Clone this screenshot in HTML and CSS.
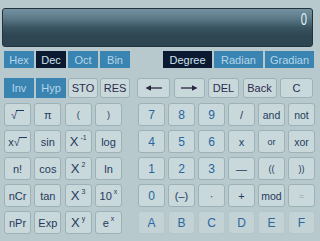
FILE: index.html
```html
<!DOCTYPE html>
<html lang="en">

<head>
    <meta charset="UTF-8">
    <meta name="viewport" content="width=device-width, initial-scale=1.0">
    <title>Calculator</title>
    <link rel="stylesheet" href="styles.css">
</head>

<body>
    <div class="calc">
        <div class="display"><span class="readout">0</span></div>

        <!-- number base and angle unit -->
        <div class="bar modes">
            <div class="group">
                <span class="tab">Hex</span>
                <span class="tab on">Dec</span>
                <span class="tab">Oct</span>
                <span class="tab">Bin</span>
            </div>
            <div class="group angles">
                <span class="tab on">Degree</span>
                <span class="tab">Radian</span>
                <span class="tab">Gradian</span>
            </div>
        </div>

        <div class="bar edit">
            <div class="group">
                <span class="tab">Inv</span>
                <span class="tab">Hyp</span>
                <span class="key cmd">STO</span>
                <span class="key cmd">RES</span>
            </div>
            <div class="group tools">
                <span class="key cmd">
                    <svg width="18" height="8" viewBox="0 0 18 8"><path d="M4 4H17" stroke="#2a2540" stroke-width="1.3"/><path d="M0.5 4L6 1.2V6.8Z" fill="#2a2540"/></svg>
                </span>
                <span class="key cmd">
                    <svg width="18" height="8" viewBox="0 0 18 8"><path d="M1 4H14" stroke="#2a2540" stroke-width="1.3"/><path d="M17.5 4L12 1.2V6.8Z" fill="#2a2540"/></svg>
                </span>
                <span class="key cmd">DEL</span>
                <span class="key cmd">Back</span>
                <span class="key cmd">C</span>
            </div>
        </div>

        <div class="pads">
            <div class="pad sci">
                <span class="key"><span class="root">√<i></i></span></span>
                <span class="key">π</span>
                <span class="key small">(</span>
                <span class="key small">)</span>

                <span class="key">x<span class="root">√<i></i></span></span>
                <span class="key">sin</span>
                <span class="key"><span class="big">X</span><sup>-1</sup></span>
                <span class="key">log</span>

                <span class="key">n!</span>
                <span class="key">cos</span>
                <span class="key"><span class="big">X</span><sup>2</sup></span>
                <span class="key">ln</span>

                <span class="key">nCr</span>
                <span class="key">tan</span>
                <span class="key"><span class="big">X</span><sup>3</sup></span>
                <span class="key"><span>10</span><sup>x</sup></span>

                <span class="key">nPr</span>
                <span class="key">Exp</span>
                <span class="key"><span class="big">X</span><sup>y</sup></span>
                <span class="key"><span>e</span><sup>x</sup></span>
            </div>

            <div class="pad num">
                <span class="key digit">7</span>
                <span class="key digit">8</span>
                <span class="key digit">9</span>
                <span class="key">/</span>
                <span class="key word">and</span>
                <span class="key word">not</span>

                <span class="key digit">4</span>
                <span class="key digit">5</span>
                <span class="key digit">6</span>
                <span class="key">x</span>
                <span class="key tiny">or</span>
                <span class="key word">xor</span>

                <span class="key digit">1</span>
                <span class="key digit">2</span>
                <span class="key digit">3</span>
                <span class="key">—</span>
                <span class="key tiny">((</span>
                <span class="key tiny">))</span>

                <span class="key digit">0</span>
                <span class="key">(–)</span>
                <span class="key">·</span>
                <span class="key">+</span>
                <span class="key word">mod</span>
                <span class="key faded">=</span>

                <span class="key hex">A</span>
                <span class="key hex">B</span>
                <span class="key hex">C</span>
                <span class="key hex">D</span>
                <span class="key hex">E</span>
                <span class="key hex">F</span>
            </div>
        </div>
    </div>
</body>

</html>
```

FILE: styles.css
```css
body {
    margin: 0;
    background-color: #b7c9cd;
    font-family: "Liberation Sans", Arial, sans-serif;
    width: 320px;
    height: 241px;
    overflow: hidden;
}

/* Visor */
.display {
    margin: 8px 7px 0 2px;
    height: 39px;
    box-sizing: border-box;
    border: 1px solid #22333d;
    border-radius: 3px;
    background: linear-gradient(to bottom, #7391a0 0%, #5c7a88 25%, #3a5562 50%, #2f4653 70%, #2d4451 100%);
    display: flex;
    justify-content: flex-end;
    align-items: flex-start;
    padding: 3px 5px 0 0;
}

.readout {
    display: inline-block;
    color: #e3f1f6;
    font-size: 16px;
    line-height: 16px;
    transform: scaleX(0.7);
    transform-origin: right;
}

.bar {
    display: flex;
    justify-content: space-between;
    padding: 0 6px 0 4px;
}

.group {
    display: flex;
    gap: 2px;
}

.modes {
    margin-top: 4px;
    height: 17px;
}

.tab {
    width: 30px;
    height: 17px;
    background-color: #3a84b2;
    color: #b5d6e8;
    font-size: 11px;
    display: flex;
    align-items: center;
    justify-content: center;
}

.tab.on {
    background-color: #0c1a31;
    color: #cfe3ef;
}

.angles .tab {
    width: 49px;
}

.edit {
    margin-top: 10px;
    height: 20px;
    padding-right: 7px;
}

.edit .tab,
.edit .key {
    width: 30px;
    height: 20px;
}

.tools {
    width: 176px;
    justify-content: space-between;
    gap: 0;
}

.tools .key:nth-child(1) { width: 33px; }
.tools .key:nth-child(2) { width: 31px; }
.tools .key:nth-child(3) { width: 31px; }
.tools .key:nth-child(4) { width: 34px; }
.tools .key:nth-child(5) { width: 33px; }

.key {
    box-sizing: border-box;
    border: 1px solid #9cb2b7;
    border-radius: 3px;
    background-color: #c9d8da;
    color: #1f3b5e;
    font-size: 11px;
    display: flex;
    align-items: center;
    justify-content: center;
    white-space: nowrap;
}

.key.cmd {
    color: #2b2c4e;
    font-size: 11px;
}

/* Teclados */
.pads {
    display: flex;
    justify-content: space-between;
    margin-top: 5px;
    padding: 0 5px 0 4px;
}

.pad {
    display: grid;
    grid-auto-rows: 23px;
    row-gap: 4px;
}

.sci {
    grid-template-columns: repeat(4, 27px);
    column-gap: 3.33px;
}

.num {
    grid-template-columns: repeat(6, 27px);
    column-gap: 3px;
}

.key.digit {
    color: #2566a0;
    font-size: 12px;
}

.key.small {
    font-size: 9px;
}

.key.word {
    font-size: 10.5px;
}

.key.tiny {
    font-size: 9px;
}

.key.faded {
    color: #8ea3ad;
    font-size: 9px;
}

.key.hex {
    color: #2a68a0;
    font-size: 12px;
    border-color: #b4c6ca;
    background-color: #c2d2d5;
}

.big {
    font-size: 13px;
}

/* expoente: item flex, entao sobe pelo alinhamento */
sup {
    font-size: 7px;
    line-height: 7px;
    align-self: flex-start;
    margin-top: 3px;
    margin-left: 2px;
}

.root {
    display: inline-flex;
    align-items: flex-start;
}

.root i {
    display: inline-block;
    width: 8px;
    margin-top: 1px;
    border-top: 1px solid #1f3b5e;
    margin-left: -1px;
}
```
